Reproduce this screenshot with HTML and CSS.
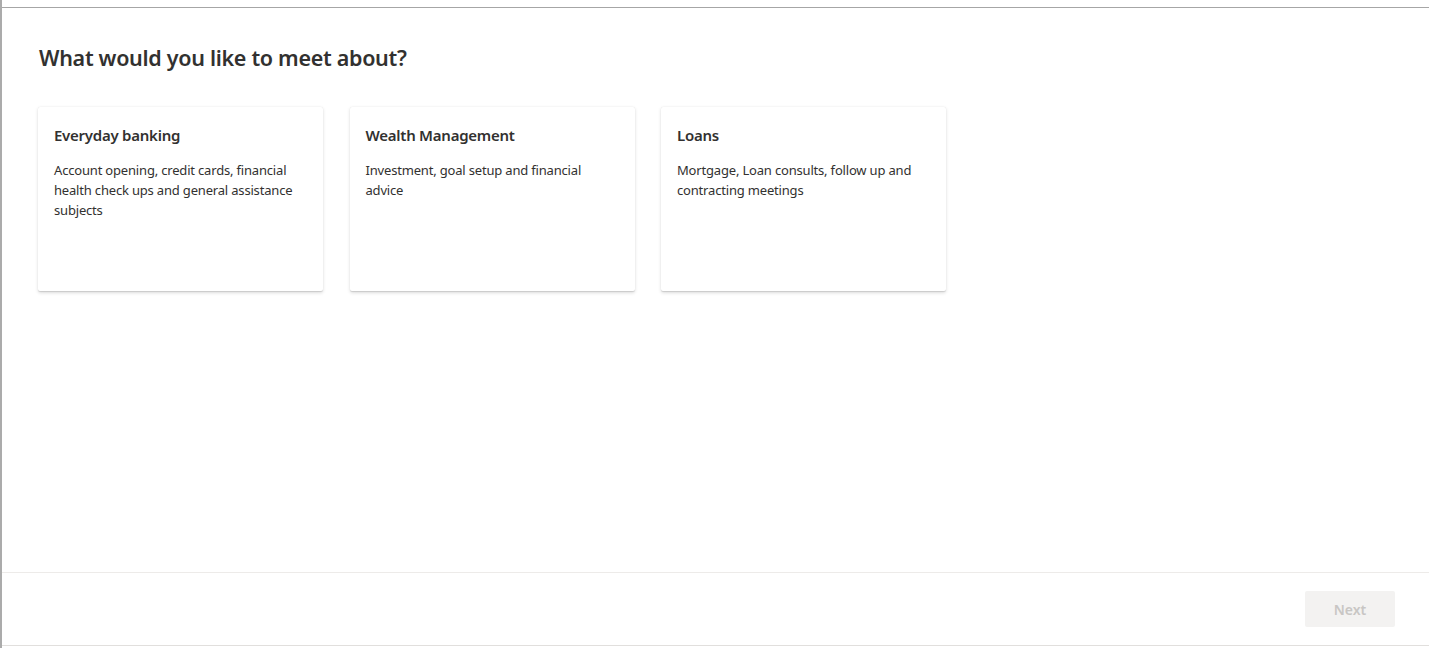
FILE: index.html
```html
<!DOCTYPE html>
<html>
<head>
<meta charset="utf-8">
<link rel="stylesheet" href="styles.css">
</head>
<body>
<div class="page">
  <div class="frame">
    <main class="main">
      <h1 class="heading">What would you like to meet about?</h1>
      <div class="cards">
        <div class="card">
          <div class="card-title">Everyday banking</div>
          <div class="card-text">Account opening, credit cards, financial health check ups and general assistance subjects</div>
        </div>
        <div class="card">
          <div class="card-title">Wealth Management</div>
          <div class="card-text">Investment, goal setup and financial advice</div>
        </div>
        <div class="card">
          <div class="card-title">Loans</div>
          <div class="card-text">Mortgage, Loan consults, follow up and contracting meetings</div>
        </div>
      </div>
    </main>
    <footer class="footer">
      <button class="next" disabled>Next</button>
    </footer>
  </div>
</div>
</body>
</html>
```

FILE: styles.css
```css
html, body {
  margin: 0;
  padding: 0;
  background: #ffffff;
}
body {
  font-family: "Noto Sans", "Open Sans", sans-serif;
  color: #323130;
}
.page {
  height: 648px;
  box-sizing: border-box;
  border-left: 2px solid #ababab;
  padding-top: 7px;
}
.frame {
  height: 639px;
  box-sizing: border-box;
  border-top: 1px solid #a6a6a6;
  border-bottom: 1px solid #e1dfdd;
  display: flex;
  flex-direction: column;
}
.main {
  flex: 1;
  padding: 34px 36px 0 37px;
}
.heading {
  margin: 0;
  font-size: 21.5px;
  line-height: 32px;
  font-weight: 600;
  letter-spacing: -0.3px;
}
.cards {
  display: flex;
  gap: 26.5px;
  margin-top: 33px;
  margin-left: -1px;
}
.card {
  width: 285px;
  height: 184px;
  box-sizing: border-box;
  padding: 16px 16px;
  background: #fff;
  border-radius: 2px;
  box-shadow: 0 1.6px 3.6px rgba(0,0,0,0.132), 0 0.3px 0.9px rgba(0,0,0,0.108);
}
.card-title {
  font-size: 15px;
  line-height: 24px;
  font-weight: 600;
  letter-spacing: -0.25px;
}
.card-text {
  margin-top: 13px;
  font-size: 13px;
  line-height: 20px;
  letter-spacing: -0.18px;
}
.footer {
  height: 73px;
  box-sizing: border-box;
  border-top: 1px solid #edebe9;
  display: flex;
  align-items: center;
  justify-content: flex-end;
  padding-right: 34px;
}
.next {
  width: 90px;
  height: 36px;
  border: none;
  border-radius: 2px;
  background: #f3f2f1;
  color: #c8c6c4;
  font-family: inherit;
  font-size: 14px;
  font-weight: 600;
  padding: 0;
}
```
